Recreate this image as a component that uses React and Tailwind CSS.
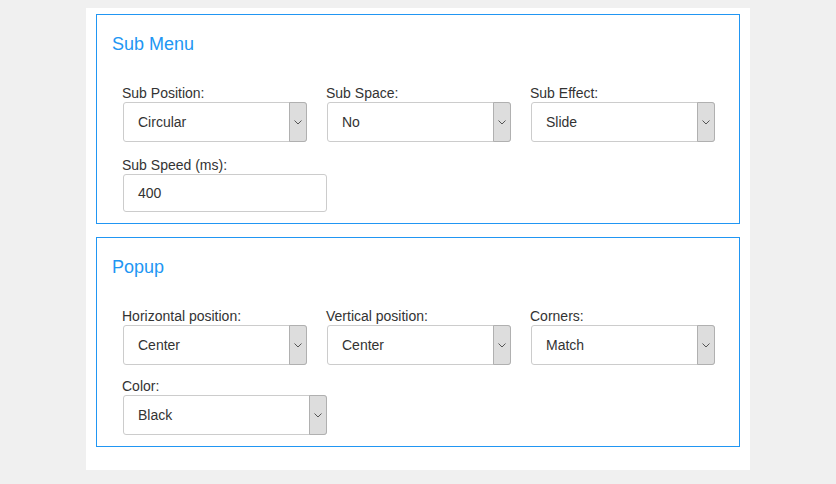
const Chevron = () => (
  <svg width="8" height="5" viewBox="0 0 8 5" fill="none">
    <polyline points="0.5,0.5 4,4 7.5,0.5" stroke="#555" strokeWidth="1" />
  </svg>
);

function Select({ value, wide }) {
  return (
    <div
      className={`ml-px flex h-[40px] rounded-[3px] border border-[#cccccc] bg-white ${
        wide ? "w-[204px]" : "w-[184px]"
      }`}
    >
      <span className="flex flex-1 items-center pl-[14px] text-[14px] text-[#333]">{value}</span>
      <span className="-my-px -mr-px flex w-[18px] items-center justify-center rounded-r-[3px] border border-[#b0b0b0] bg-[#dddddd]">
        <Chevron />
      </span>
    </div>
  );
}

function Input({ value }) {
  return (
    <div className="ml-px flex h-[38px] w-[204px] items-center rounded-[3px] border border-[#cccccc] bg-white pl-[14px] text-[14px] text-[#333]">
      {value}
    </div>
  );
}

function Field({ label, children }) {
  return (
    <div>
      <div className="text-[14px] leading-[18px] text-[#333]">{label}</div>
      {children}
    </div>
  );
}

function Section({ title, rowGap, className, children }) {
  return (
    <div className={`border border-[#2196f3] px-[15px] pt-[19px] pb-[11px] ${className}`}>
      <h2 className="text-[18px] leading-[20px] text-[#2196f3]">{title}</h2>
      <div className={`mt-[30px] grid w-[622px] grid-cols-3 pl-[10px] ${rowGap}`}>{children}</div>
    </div>
  );
}

export default function App() {
  return (
    <div
      className="min-h-[484px] bg-[#f0f0f0] pt-[8px]"
      style={{ fontFamily: '"Liberation Sans", Arial, sans-serif' }}
    >
      <div className="mx-auto w-[664px] bg-white px-[10px] pt-[6px] pb-[23px]">
        <Section title="Sub Menu" rowGap="gap-y-[14px]">
          <Field label="Sub Position:">
            <Select value="Circular" />
          </Field>
          <Field label="Sub Space:">
            <Select value="No" />
          </Field>
          <Field label="Sub Effect:">
            <Select value="Slide" />
          </Field>
          <Field label="Sub Speed (ms):">
            <Input value="400" />
          </Field>
        </Section>

        <Section title="Popup" rowGap="gap-y-[12px]" className="mt-[13px]">
          <Field label="Horizontal position:">
            <Select value="Center" />
          </Field>
          <Field label="Vertical position:">
            <Select value="Center" />
          </Field>
          <Field label="Corners:">
            <Select value="Match" />
          </Field>
          <Field label="Color:">
            <Select value="Black" wide />
          </Field>
        </Section>
      </div>
    </div>
  );
}
